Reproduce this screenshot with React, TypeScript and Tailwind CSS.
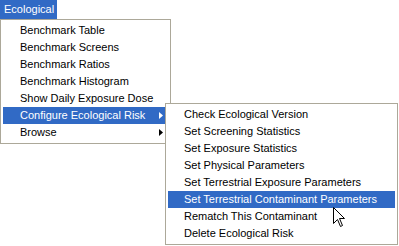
import React from "react";

const mainItems: { label: string; sub?: boolean; active?: boolean }[] = [
  { label: "Benchmark Table" },
  { label: "Benchmark Screens" },
  { label: "Benchmark Ratios" },
  { label: "Benchmark Histogram" },
  { label: "Show Daily Exposure Dose" },
  { label: "Configure Ecological Risk", sub: true, active: true },
  { label: "Browse", sub: true },
];

const subItems: { label: string; active?: boolean }[] = [
  { label: "Check Ecological Version" },
  { label: "Set Screening Statistics" },
  { label: "Set Exposure Statistics" },
  { label: "Set Physical Parameters" },
  { label: "Set Terrestrial Exposure Parameters" },
  { label: "Set Terrestrial Contaminant Parameters", active: true },
  { label: "Rematch This Contaminant" },
  { label: "Delete Ecological Risk" },
];

function Arrow({ white }: { white?: boolean }) {
  return (
    <svg width="4" height="7" viewBox="0 0 4 7" className="block">
      <path d="M0 0 L4 3.5 L0 7 Z" fill={white ? "#ffffff" : "#000000"} />
    </svg>
  );
}

export default function App() {
  return (
    <div
      className="relative w-[399px] h-[246px] bg-white overflow-hidden text-[11px] text-black"
      style={{ fontFamily: '"Liberation Sans", Arial, sans-serif' }}
    >
      <div className="flex h-[19px]">
        <div className="bg-[#316ac5] text-white w-[57px] h-[19px] flex items-center pl-[4px] whitespace-nowrap">
          Ecological
        </div>
      </div>

      <div className="absolute left-0 top-[19px] w-[171px] border border-[#aca899] bg-white p-[2px]">
        {mainItems.map((it) => (
          <div
            key={it.label}
            className={
              "h-[17px] flex items-center pl-[17px] pr-[5px] " +
              (it.active ? "bg-[#316ac5] text-white" : "")
            }
          >
            <span className="flex-1 whitespace-nowrap">{it.label}</span>
            {it.sub && <Arrow white={it.active} />}
          </div>
        ))}
      </div>

      <div className="absolute left-[165px] top-[103px] w-[233px] border border-[#aca899] bg-white p-[2px]">
        {subItems.map((it) => (
          <div
            key={it.label}
            className={
              "h-[17px] flex items-center pl-[16px] " +
              (it.active ? "bg-[#316ac5] text-white" : "")
            }
          >
            <span className="whitespace-nowrap">{it.label}</span>
          </div>
        ))}
      </div>

      <svg
        className="absolute left-[333px] top-[207px]"
        width="13"
        height="22"
        viewBox="0 0 13 22"
      >
        <path
          d="M0.5 0.5 L0.5 16.5 L4.5 12.5 L7.5 19.5 L9.5 18.5 L6.5 11.5 L11.5 11.5 Z"
          fill="#ffffff"
          stroke="#000000"
          strokeWidth="1"
          strokeLinejoin="miter"
        />
      </svg>
    </div>
  );
}
